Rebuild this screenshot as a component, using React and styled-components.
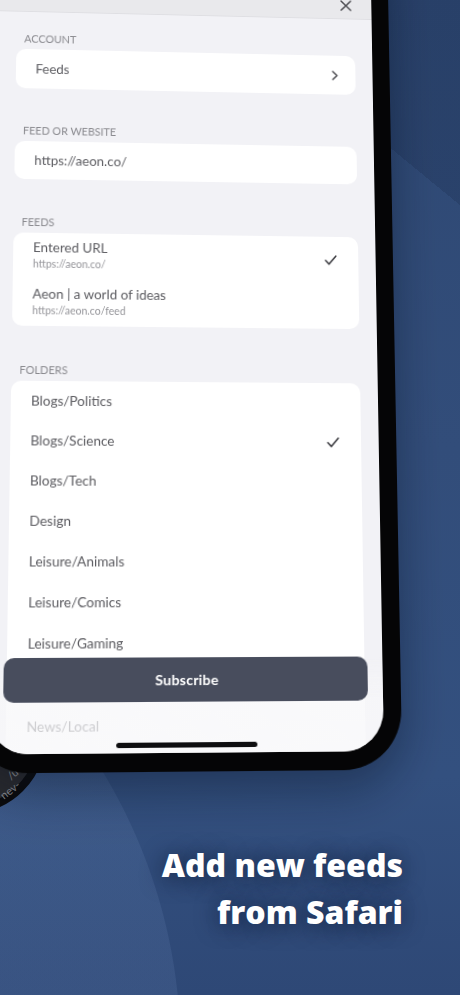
import styled, { createGlobalStyle } from 'styled-components';

const GlobalStyle = createGlobalStyle`
  html, body {
    margin: 0;
    padding: 0;
    background: #2f4a77;
  }
  body {
    font-family: Lato, "Noto Sans", sans-serif;
    -webkit-font-smoothing: antialiased;
  }
`;

const feeds = [
  { title: 'Entered URL', url: 'https://aeon.co/', checked: true },
  { title: 'Aeon | a world of ideas', url: 'https://aeon.co/feed' },
];

const folders = [
  'Blogs/Politics',
  'Blogs/Science',
  'Blogs/Tech',
  'Design',
  'Leisure/Animals',
  'Leisure/Comics',
  'Leisure/Gaming',
  'Leisure/Travel',
  'News/Local',
  'News/Politics',
];

const selectedFolder = 'Blogs/Science';

const CloseIcon = () => (
  <svg width="14" height="14" viewBox="0 0 14 14">
    <path d="M2 2l10 10M12 2L2 12" stroke="#4a4a4f" strokeWidth="1.6" strokeLinecap="round" />
  </svg>
);

const Chevron = () => (
  <svg width="7" height="11" viewBox="0 0 7 11">
    <path d="M1.2 1.2L5.6 5.5 1.2 9.8" fill="none" stroke="#4a4a4f" strokeWidth="1.6" strokeLinecap="round" strokeLinejoin="round" />
  </svg>
);

const Check = () => (
  <svg width="13" height="11" viewBox="0 0 13 11">
    <path d="M1.2 5.8l3.6 3.8L11.8 1.2" fill="none" stroke="#3d3d42" strokeWidth="1.6" strokeLinecap="round" strokeLinejoin="round" />
  </svg>
);

const App = () => (
  <>
    <GlobalStyle />
    <Page>
      <Watch>
        <WatchText $top={96} $left={104}>/u</WatchText>
        <WatchText $top={112} $left={96}>nev-</WatchText>
      </Watch>

      <Phone>
        <Screen>
          <SheetHeader>
            <CloseIcon />
          </SheetHeader>

          <Body>
            <Section>
              <SectionLabel>Account</SectionLabel>
              <Card>
                <LinkRow>
                  <RowText>Feeds</RowText>
                  <Chevron />
                </LinkRow>
              </Card>
            </Section>

            <Section>
              <SectionLabel>Feed or Website</SectionLabel>
              <Card>
                <FieldRow>
                  <RowText>https://aeon.co/</RowText>
                </FieldRow>
              </Card>
            </Section>

            <Section>
              <SectionLabel>Feeds</SectionLabel>
              <Card>
                {feeds.map(feed => (
                  <FeedRow key={feed.url}>
                    <FeedText>
                      <RowText>{feed.title}</RowText>
                      <FeedUrl>{feed.url}</FeedUrl>
                    </FeedText>
                    {feed.checked && <Check />}
                  </FeedRow>
                ))}
              </Card>
            </Section>

            <Section>
              <SectionLabel>Folders</SectionLabel>
              <Card>
                {folders.map(name => (
                  <FolderRow key={name}>
                    <RowText>{name}</RowText>
                    {name === selectedFolder && <Check />}
                  </FolderRow>
                ))}
              </Card>
            </Section>
          </Body>

          <Footer>
            <SubscribeButton>Subscribe</SubscribeButton>
            <HomeIndicator />
          </Footer>
        </Screen>
      </Phone>

      <Caption>
        Add new feeds
        <br />
        from Safari
      </Caption>
    </Page>
  </>
);

export default App;

const Page = styled.div`
  position: relative;
  width: 460px;
  height: 995px;
  overflow: hidden;
  display: flex;
  flex-direction: column;
  background:
    linear-gradient(219.4deg, rgba(14, 28, 56, 0.18) 158.5px, transparent 158.5px),
    radial-gradient(circle 537px at -356px 1050px, rgba(130, 160, 210, 0.13) 536px, transparent 537px),
    linear-gradient(180deg, #2e4873 0%, #324d7a 45%, #33507f 78%, #2e4876 100%);
`;

const Watch = styled.div`
  position: absolute;
  left: -105px;
  top: 663px;
  width: 150px;
  height: 150px;
  box-sizing: border-box;
  border-radius: 50%;
  border: 8px solid #0a0a0b;
  background: #2b2b2e;
`;

const WatchText = styled.span`
  position: absolute;
  top: ${p => p.$top}px;
  left: ${p => p.$left}px;
  font-size: 11px;
  color: #8e8e92;
  transform: rotate(-38deg);
`;

const Phone = styled.div`
  position: relative;
  z-index: 1;
  flex: none;
  align-self: flex-start;
  width: 424px;
  margin: -108px 0 0 -25px;
  padding: 18px;
  box-sizing: border-box;
  background: #050506;
  border-radius: 58px;
  box-shadow: 0 18px 46px rgba(6, 14, 32, 0.4);
  transform-origin: 211px 578px;
  transform: perspective(1000px) rotateX(5deg) rotateY(2.5deg);
`;

const Screen = styled.div`
  position: relative;
  height: 837px;
  border-radius: 40px;
  overflow: hidden;
  background: #f2f2f6;
  display: flex;
  flex-direction: column;
`;

const SheetHeader = styled.div`
  flex: none;
  height: 85px;
  box-sizing: border-box;
  display: flex;
  align-items: flex-end;
  justify-content: flex-end;
  padding: 0 20px 7px;
  background: #e9e9ec;
  border-bottom: 1px solid #dfdfe3;
`;

const Body = styled.div`
  display: flex;
  flex-direction: column;
  gap: 34px;
  padding: 18px 18px 0;
`;

const Section = styled.div`
  display: flex;
  flex-direction: column;
  gap: 3px;
`;

const SectionLabel = styled.div`
  padding: 3px 0 0 8px;
  font-size: 11px;
  line-height: 16px;
  text-transform: uppercase;
  color: #8a8a8f;
`;

const Card = styled.div`
  display: flex;
  flex-direction: column;
  background: #fff;
  border-radius: 10px;
`;

const Row = styled.div`
  display: flex;
  align-items: center;
  justify-content: space-between;
  padding: 0 22px 0 20px;
`;

const LinkRow = styled(Row)`
  height: 42px;
  padding-right: 18px;
`;

const FieldRow = styled(Row)`
  height: 40px;
`;

const FeedRow = styled(Row)`
  height: 48px;
`;

const FolderRow = styled(Row)`
  height: 40px;
`;

const FeedText = styled.div`
  display: flex;
  flex-direction: column;
  margin-top: -3px;
`;

const RowText = styled.span`
  font-size: 13.5px;
  line-height: 18px;
  color: #5c5c61;
`;

const FeedUrl = styled.span`
  font-size: 10.5px;
  line-height: 14px;
  margin-top: 1px;
  color: #949499;
`;

const Footer = styled.div`
  position: absolute;
  left: 0;
  right: 0;
  bottom: 0;
  height: 92px;
  display: flex;
  flex-direction: column;
  align-items: center;
  background: linear-gradient(180deg, rgba(247, 247, 249, 0) 0, rgba(247, 247, 249, 0.72) 40px, rgba(247, 247, 249, 0.72) 100%);
`;

const SubscribeButton = styled.button`
  flex: none;
  width: 358px;
  height: 43px;
  border: none;
  border-radius: 10px;
  background: #484d5d;
  color: #fff;
  font-family: Lato, "Noto Sans", sans-serif;
  font-size: 14px;
  font-weight: 700;
  letter-spacing: 0.2px;
`;

const HomeIndicator = styled.div`
  margin-top: auto;
  margin-bottom: 5px;
  width: 138px;
  height: 5px;
  border-radius: 3px;
  background: #0e0e10;
`;

const Caption = styled.div`
  margin: 76px 57px 0 0;
  text-align: right;
  font-family: "Open Sans", Lato, sans-serif;
  font-size: 32px;
  font-weight: 800;
  line-height: 47px;
  color: #fff;
  text-shadow: 0 2px 22px rgba(10, 20, 44, 0.75);
`;
